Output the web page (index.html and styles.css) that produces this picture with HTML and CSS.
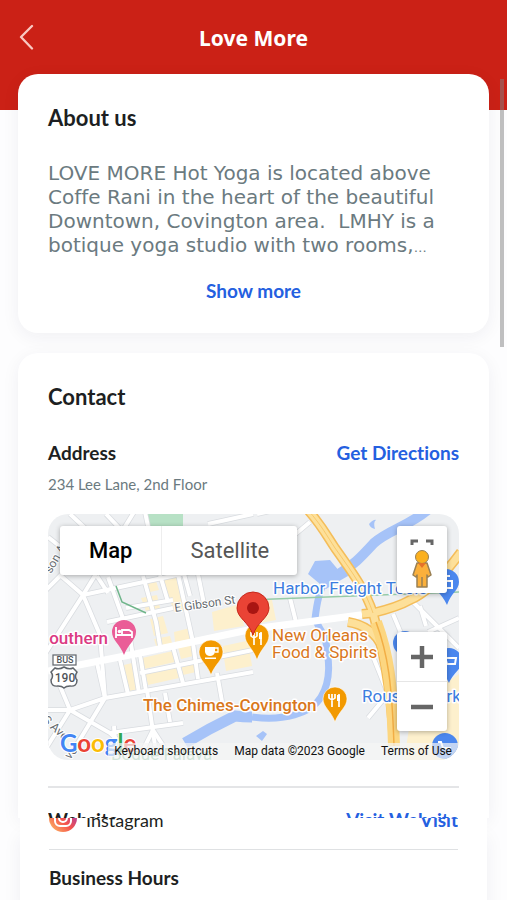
FILE: index.html
```html
<!DOCTYPE html>
<html lang="en">
<head>
  <meta charset="UTF-8">
  <meta name="viewport" content="width=device-width, initial-scale=1.0">
  <title>Love More</title>
  <link rel="stylesheet" href="styles.css">
</head>
<body>
  <header class="header">
    <button class="back-btn" aria-label="Back">
      <svg width="16" height="26" viewBox="0 0 16 26"><path d="M14 2 L3 13 L14 24.500" fill="none" stroke="#f9c9c2" stroke-width="2.300" stroke-linecap="round" stroke-linejoin="round"/></svg>
    </button>
    <h1 class="title">Love More</h1>
  </header>

  <main class="content">
    <section class="card">
      <h2 class="card-title">About us</h2>
      <p class="about">LOVE MORE Hot Yoga is located above Coffe Rani in the heart of the beautiful Downtown, Covington area.&nbsp; LMHY is a botique yoga studio with two rooms,<span class="more-dots">…</span></p>
      <button class="link show-more">Show more</button>
    </section>

    <section class="card contact">
      <h2 class="card-title">Contact</h2>
      <div class="row">
        <h3 class="label">Address</h3>
        <a class="link" href="#">Get Directions</a>
      </div>
      <p class="street">234 Lee Lane, 2nd Floor</p>

      <div class="map">
        <svg class="map-canvas" viewBox="0 0 411 246" preserveAspectRatio="xMidYMid slice">
          <rect width="411" height="246" fill="#eef0f2"/>
          <!-- park and commercial blocks -->
          <path d="M99 0h36v14h-33z" fill="#b7e1c5"/>
          <g fill="#fdf0cd">
            <path d="M115 65l14-2 9 33-12 2z"/>
            <path d="M99 69l9-2 3 9-9 2zM93 84l16-3 3 13-14 3z"/>
            <path d="M102 105l13-3 5 17-14 3zM106 125l16-3 3 10-16 3z"/>
            <path d="M164 98l28-8 4 22-30 5z"/>
            <path d="M126 118l16-4 2 11-17 3z"/>
            <path d="M72 152l12-3 6 26-12 3zM94 144l31-7 2 11-31 7zM97 158l31-6 3 12-31 7z"/>
            <path d="M130 133l13-3 2 12-12 3zM133 150l13-3 2 11-13 3z"/>
            <path d="M175 132l28-6 2 10-29 6zM176 144l26-5 2 13-26 5z"/>
            <path d="M202 88l22-2 4 20-26 5z"/>
            <path d="M365 190l46-30v86h-55z"/>
          </g>
          <!-- river -->
          <g fill="none" stroke="#a6c3f8">
            <path d="M382-6C362 12 340 16 326 29C314 42 305 52 289 61" stroke-width="10"/>
            <path d="M279 62C271 78 269 88 267 105Q271 114 277 123C281 145 284 165 273 183C263 200 235 207 204 203" stroke-width="7"/>
            <path d="M204 203Q195 203 187 202Q162 214 137 229" stroke-width="11"/>
          </g>
          <path d="M260 60L267 47L282 46L292 58L299 55L300 62L286 70L278 75Z" fill="#a6c3f8"/>
          <path d="M321 10q5-5 7-4q-3 2-1 9q-5-1-6-5zM208 222l7-5 4 3-5 7z" fill="#a6c3f8"/>
          <!-- streets -->
          <g fill="none" stroke="#d9dce0" stroke-width="5.500">
            <path d="M22 0L38 15M0 23L14 34M86-2L35 81L-3 140M12 61L35 81L52 121L57 184"/>
            <path d="M-4 78L14 60M35 81L105 66L200 46M49 62L60 79M60 63L82 124L91 179"/>
            <path d="M95 62L108 108L113 138M58 0L75 18M97-2L110 60M130 60L145 128"/>
            <path d="M59 108L125 94M78 94L125 86M112 61L120 88M136 60L142 82M150 60L156 90"/>
            <path d="M-4 196L22 196L57 184L205 158M22 196L-3 236M22 196L62 219L85 240M57 184L28 232"/>
            <path d="M62 219L135 209M99 176L107 232M117 179L122 208M7 160L22 196M49 149L57 184"/>
            <path d="M72 146L80 180M92 141L98 177M125 133L135 169M145 129L150 165M169 159L175 193"/>
            <path d="M92 159L205 136M66 212L68 240M105 216L92 242M105 216L118 236"/>
            <path d="M209 0L245-8M160 10L205 0M238 28L262 8M324 140L340 180L320 204"/>
            <path d="M242 84L248 108M345 100L355 124M372 92L378 112M380 118L411 104M365 88L411 134"/>
            <path d="M365 128L372 142M365 150L362 190"/>
          </g>
          <g fill="none" stroke="#fff" stroke-width="4">
            <path d="M22 0L38 15M0 23L14 34M86-2L35 81L-3 140M12 61L35 81L52 121L57 184"/>
            <path d="M-4 78L14 60M35 81L105 66L200 46M49 62L60 79M60 63L82 124L91 179"/>
            <path d="M95 62L108 108L113 138M58 0L75 18M97-2L110 60M130 60L145 128"/>
            <path d="M59 108L125 94M78 94L125 86M112 61L120 88M136 60L142 82M150 60L156 90"/>
            <path d="M-4 196L22 196L57 184L205 158M22 196L-3 236M22 196L62 219L85 240M57 184L28 232"/>
            <path d="M62 219L135 209M99 176L107 232M117 179L122 208M7 160L22 196M49 149L57 184"/>
            <path d="M72 146L80 180M92 141L98 177M125 133L135 169M145 129L150 165M169 159L175 193"/>
            <path d="M92 159L205 136M66 212L68 240M105 216L92 242M105 216L118 236"/>
            <path d="M209 0L245-8M160 10L205 0M238 28L262 8M324 140L340 180L320 204"/>
            <path d="M242 84L248 108M345 100L355 124M372 92L378 112M380 118L411 104M365 88L411 134"/>
            <path d="M365 128L372 142M365 150L362 190"/>
          </g>
          <path d="M0 157L92 139L205 115L320 100" fill="none" stroke="#fff" stroke-width="7"/>
          <path d="M68 72L74 88L98 99" fill="none" stroke="#6fb58a" stroke-width="1.500"/>
          <path d="M196 86L411 78" fill="none" stroke="#96cba7" stroke-width="1.500"/>
          <!-- highways -->
          <g fill="none" stroke="#f4bd5a" stroke-width="10">
            <path d="M260-4C274 12 279 22 287 34C307 62 318 78 325 99C332 126 342 160 346 232"/>
            <path d="M314 100L325 99Q350 93 362 86Q385 76 413 38M300 108Q325 112 334 133"/>
          </g>
          <g fill="none" stroke="#fde09a" stroke-width="7">
            <path d="M260-4C274 12 279 22 287 34C307 62 318 78 325 99C332 126 342 160 346 232"/>
            <path d="M314 100L325 99Q350 93 362 86Q385 76 413 38M300 108Q325 112 334 133"/>
          </g>
          <path d="M328 108C340 140 344 170 346 232" fill="none" stroke="#fcd680" stroke-width="12"/>
          <path d="M328 108C340 140 344 170 346 232" fill="none" stroke="#f2ae45" stroke-width="1.500"/>
          <path d="M260-4C274 12 279 22 287 34C307 62 318 78 325 99" fill="none" stroke="#f7c86c" stroke-width="1"/>
          <!-- blue store pins -->
          <g fill="#4b87ee">
            <path d="M398 55a13 13 0 0 1 13 13c0 8-8 11-12 23c-5-12-14-15-14-23a13 13 0 0 1 13-13z"/>
            <path d="M401 134a13 13 0 0 1 13 13c0 8-9 12-13 22c-4-10-13-14-13-22a13 13 0 0 1 13-13z"/>
            <circle cx="357" cy="129" r="12"/>
            <circle cx="397" cy="232" r="13"/>
          </g>
          <g fill="none" stroke="#fff" stroke-width="2">
            <path d="M393 67h11v7h-9M398 66v-4h4M394 143h3l2 7h8l1-6h-10M390 228h3l2 6h8"/>
          </g>
          <!-- US 190 shield -->
          <rect x="5" y="141" width="23" height="10" fill="#fff" stroke="#60656b" stroke-width="1.200"/>
          <path d="M7 154q4 2 9-1q5 3 9 1l4 4q-3 5 0 8q0 7-7 6q-4 0-6 2q-2-2-6-2q-7 1-7-6q3-4 0-8z" fill="#fff" stroke="#60656b" stroke-width="1.500"/>
          <text class="shield" x="17" y="149" font-size="9">BUS</text>
          <text class="shield" x="17" y="168" font-size="12">190</text>
          <!-- place names -->
          <text class="street-name" transform="translate(127 98) rotate(-8)">E Gibson St</text>
          <text class="street-name" transform="translate(3 60) rotate(-60)">son Ave</text>
          <text class="street-name" transform="translate(-6 207) rotate(42)">S Ave</text>
          <text class="street-name" transform="translate(22 246) rotate(-50)">ve</text>
          <text class="place water" x="63" y="246">Bogue Falaya</text>
          <text class="place blue" x="225" y="80">Harbor Freight Tools</text>
          <text class="place blue" x="314" y="188">Rouses Market</text>
          <text class="place pink" x="60" y="130">outhern</text>
          <text class="place orange" x="224" y="127">New Orleans</text>
          <text class="place orange" x="224" y="144">Food &amp; Spirits</text>
          <text class="place orange bold" x="95" y="197">The Chimes-Covington</text>
          <!-- lodging pin -->
          <path d="M76 106a12 12 0 0 1 12 12c0 8-8 12-12 23c-4-11-12-15-12-23a12 12 0 0 1 12-12z" fill="#ea5d97"/>
          <path d="M68 113v11M68 121h16v3M84 121v-3l-3-2h-7v5" fill="none" stroke="#fff" stroke-width="1.800"/><circle cx="71.500" cy="117.500" r="1.800" fill="#fff"/>
          <!-- cafe and restaurant pins -->
          <g fill="#f29900" stroke="#fff" stroke-width="0.600">
            <path d="M163 126a12 12 0 0 1 12 12c0 8-8 12-12 23c-4-11-12-15-12-23a12 12 0 0 1 12-12z"/>
            <path d="M209 110a12 12 0 0 1 12 12c0 8-8 12-12 24c-4-12-12-16-12-24a12 12 0 0 1 12-12z"/>
            <path d="M287 173a12 12 0 0 1 12 12c0 8-8 12-12 23c-4-11-12-15-12-23a12 12 0 0 1 12-12z"/>
          </g>
          <path d="M157 133h10v5q-1 4-5 4t-5-4zM157 143.500h11v1.500h-11z" fill="#fff"/><path d="M167 134h3v4h-3" fill="none" stroke="#fff" stroke-width="1.300"/>
          <g fill="none" stroke="#fff">
            <path d="M281 180v4q3 3 6 0v-4M284 180v13M291 180v13" stroke-width="1.700"/><path d="M290.500 181v6" stroke-width="3"/>
            <path d="M203 118v4q3 3 6 0v-4M206 119v12M213 118v13" stroke-width="1.700"/><path d="M212.500 119v6" stroke-width="3"/>
          </g>
          <!-- studio marker -->
          <path d="M205 78a16 16 0 0 1 16 16c0 10-12 14-16 27c-4-13-16-17-16-27a16 16 0 0 1 16-16z" fill="#ea4335" stroke="#c5291d"/>
          <circle cx="205" cy="94" r="6" fill="#a91512"/>
          <text class="google" x="12" y="238"><tspan fill="#4285f4">G</tspan><tspan fill="#ea4335">o</tspan><tspan fill="#fbbc05">o</tspan><tspan fill="#4285f4">g</tspan><tspan fill="#34a853">l</tspan><tspan fill="#ea4335">e</tspan></text>
        </svg>

        <div class="map-types">
          <button class="type-btn active">Map</button>
          <button class="type-btn">Satellite</button>
        </div>

        <div class="control street-view">
          <button class="control-btn fullscreen-btn" aria-label="Toggle fullscreen view">
            <svg width="24" height="8" viewBox="0 0 24 8"><path d="M2 6V2H8M16 2H22V6" fill="none" stroke="#666" stroke-width="3"/></svg>
          </button>
          <button class="control-btn pegman-btn" aria-label="Street View">
            <svg width="24" height="40" viewBox="0 0 24 40">
              <path d="M7 14h10l4 12-3 2-1-2v12H7V26l-1 2-3-2z" fill="#fbb03b" stroke="#9a8053" stroke-width="1.500" stroke-linejoin="round"/>
              <circle cx="12" cy="8" r="6.500" fill="#fbb01e" stroke="#9a8053" stroke-width="1"/>
              <path d="M8 14h8l-4 5z" fill="#e5722a"/><path d="M12 28v10" stroke="#9a8053" stroke-width="1.500"/>
            </svg>
          </button>
        </div>

        <div class="control zoom">
          <button class="control-btn zoom-btn" aria-label="Zoom in">
            <svg width="24" height="24" viewBox="0 0 24 24"><path d="M1 12H23M12 1V23" stroke="#666" stroke-width="4.500"/></svg>
          </button>
          <button class="control-btn zoom-btn" aria-label="Zoom out">
            <svg width="24" height="24" viewBox="0 0 24 24"><path d="M1 12H23" stroke="#666" stroke-width="4.500"/></svg>
          </button>
        </div>

        <div class="attribution">
          <button class="shortcuts">Keyboard shortcuts</button>
          <span>Map data ©2023 Google</span>
          <a href="#">Terms of Use</a>
        </div>
      </div>

      <div class="row website">
        <h3 class="label">Website</h3>
        <a class="link" href="#">Visit Website</a>
      </div>
    </section>

    <section class="card details">
      <div class="row social">
        <span class="social-name">
          <svg width="28" height="28" viewBox="0 0 28 28">
            <defs>
              <linearGradient id="insta" x1="0" y1="1" x2="1" y2="0">
                <stop offset="0" stop-color="#fdc468"/>
                <stop offset="0.450" stop-color="#f5534b"/>
                <stop offset="1" stop-color="#8a32c8"/>
              </linearGradient>
            </defs>
            <circle cx="14" cy="14" r="14" fill="url(#insta)"/>
            <rect x="6" y="6" width="16" height="16" rx="5" fill="none" stroke="#fff" stroke-width="2"/>
            <circle cx="14" cy="14" r="4" fill="none" stroke="#fff" stroke-width="2"/>
          </svg>
          Instagram
        </span>
        <a class="link" href="#">Visit</a>
      </div>
      <h3 class="label hours">Business Hours</h3>
    </section>
  </main>

  <div class="scroll-thumb"></div>
</body>
</html>
```
FILE: styles.css
```css
* {
    box-sizing: border-box;
}

body {
    margin: 0;
    min-height: 100vh;
    display: flex;
    flex-direction: column;
    position: relative;
    background: #fdfdfe;
    color: #1d1f22;
    font-family: Lato, "Open Sans", sans-serif;
    font-variant-ligatures: none;
}

h1, h2, h3, p {
    margin: 0;
}

button {
    padding: 0;
    border: none;
    background: none;
    font-family: inherit;
    cursor: pointer;
}

svg {
    display: block;
}

.header {
    display: grid;
    grid-template-columns: 28px 1fr 28px;
    align-items: start;
    height: 110px;
    padding: 24px 18px 0;
    background: #cb2116;
}

.title {
    color: #fff;
    font-family: "Noto Sans", sans-serif;
    font-size: 21px;
    font-weight: 700;
    line-height: 28px;
    text-align: center;
}

.content {
    flex: 1;
    display: flex;
    flex-direction: column;
    margin-top: -36px;
}

.card {
    margin: 0 18px 20px;
    padding: 30px;
    border-radius: 20px;
    background: #fff;
    box-shadow: 0 4px 18px rgba(30, 30, 60, 0.06);
}

.card-title {
    font-size: 22px;
    line-height: 28px;
}

.label {
    font-size: 19px;
    line-height: 24px;
}

.link {
    color: #2460e0;
    font-size: 19px;
    font-weight: 700;
    line-height: 24px;
    text-decoration: none;
}

.about {
    margin-top: 29px;
    color: #6b7a80;
    font-family: "DejaVu Sans", sans-serif;
    font-size: 20px;
    line-height: 24px;
}

.more-dots {
    font-size: 13px;
    line-height: 1;
}

.show-more {
    display: block;
    margin: 22px auto 0;
}

.row {
    display: flex;
    justify-content: space-between;
}

.contact {
    margin-bottom: 0;
    padding-bottom: 0;
    border-radius: 20px 20px 0 0;
}

.contact .card-title {
    margin-bottom: 30px;
}

.street {
    margin: 9px 0 20px;
    color: #6b7a80;
    font-size: 15px;
    line-height: 20px;
}

/* map */
.map {
    position: relative;
    height: 246px;
    border-radius: 20px;
    overflow: hidden;
    font-family: Roboto, sans-serif;
}

.map-canvas {
    width: 100%;
    height: 100%;
}

.place {
    font-size: 17px;
    stroke: #fff;
    stroke-width: 3px;
    stroke-linejoin: round;
    paint-order: stroke;
}

.blue {
    fill: #3b7de0;
}

.orange {
    fill: #d9771c;
}

.pink {
    fill: #db3a83;
    font-weight: 500;
    text-anchor: end;
}

.bold {
    font-weight: 500;
}

.water {
    fill: #7dbd98;
}

.street-name {
    fill: #666b70;
    font-size: 12px;
    stroke: #fff;
    stroke-width: 2px;
    paint-order: stroke;
}

.shield {
    fill: #50555a;
    font-weight: 500;
    text-anchor: middle;
}

.google {
    font-family: Lato, sans-serif;
    font-size: 24px;
    font-weight: 700;
    stroke: #fff;
    stroke-width: 2px;
    paint-order: stroke;
}

.map-types {
    position: absolute;
    top: 12px;
    left: 12px;
    display: flex;
    height: 49px;
    border-radius: 3px;
    background: #fff;
    box-shadow: 0 1px 5px rgba(0, 0, 0, 0.3);
}

.type-btn {
    padding: 0 29px;
    color: #565656;
    font-size: 22px;
}

.type-btn + .type-btn {
    padding: 0 28px;
    border-left: 1px solid #eee;
}

.type-btn.active {
    color: #000;
    font-weight: 500;
}

.control {
    position: absolute;
    right: 12px;
    width: 50px;
    display: flex;
    flex-direction: column;
    border-radius: 3px;
    background: #fff;
    box-shadow: 0 1px 5px rgba(0, 0, 0, 0.3);
}

.control-btn {
    display: flex;
    justify-content: center;
}

.street-view {
    top: 12px;
    height: 67px;
    padding-top: 13px;
}

.pegman-btn {
    margin-top: 2px;
}

.zoom {
    bottom: 29px;
}

.zoom-btn {
    align-items: center;
    height: 49px;
}

.zoom-btn + .zoom-btn {
    height: 50px;
    border-top: 1px solid #e6e6e6;
}

.attribution {
    position: absolute;
    right: 0;
    bottom: 0;
    display: flex;
    gap: 16px;
    padding: 0 7px 0 6px;
    background: rgba(245, 245, 245, 0.7);
    color: #111;
    font-size: 12px;
    line-height: 17px;
}

.attribution a,
.shortcuts {
    color: inherit;
    font-size: inherit;
    line-height: inherit;
    text-decoration: none;
}

/* the row is cut off at the fold */
.website {
    height: 32px;
    margin-top: 26px;
    padding-top: 20px;
    border-top: 2px solid #e4e5e7;
    overflow: hidden;
}

.details {
    flex: 1;
    margin: 0 20px;
    padding: 0 29px;
    border-radius: 0;
    box-shadow: 0 18px 18px rgba(30, 30, 60, 0.06);
}

.social {
    height: 32px;
    align-items: flex-end;
    padding-bottom: 17px;
    border-bottom: 1px solid #dfe1e3;
    overflow: hidden;
}

.social-name {
    display: flex;
    align-items: flex-end;
    gap: 9px;
    font-size: 18px;
    line-height: 24px;
}

.hours {
    margin-top: 16px;
}

.scroll-thumb {
    position: absolute;
    top: 79px;
    right: 3px;
    width: 4px;
    height: 268px;
    background: rgba(130, 130, 130, 0.5);
}
```
